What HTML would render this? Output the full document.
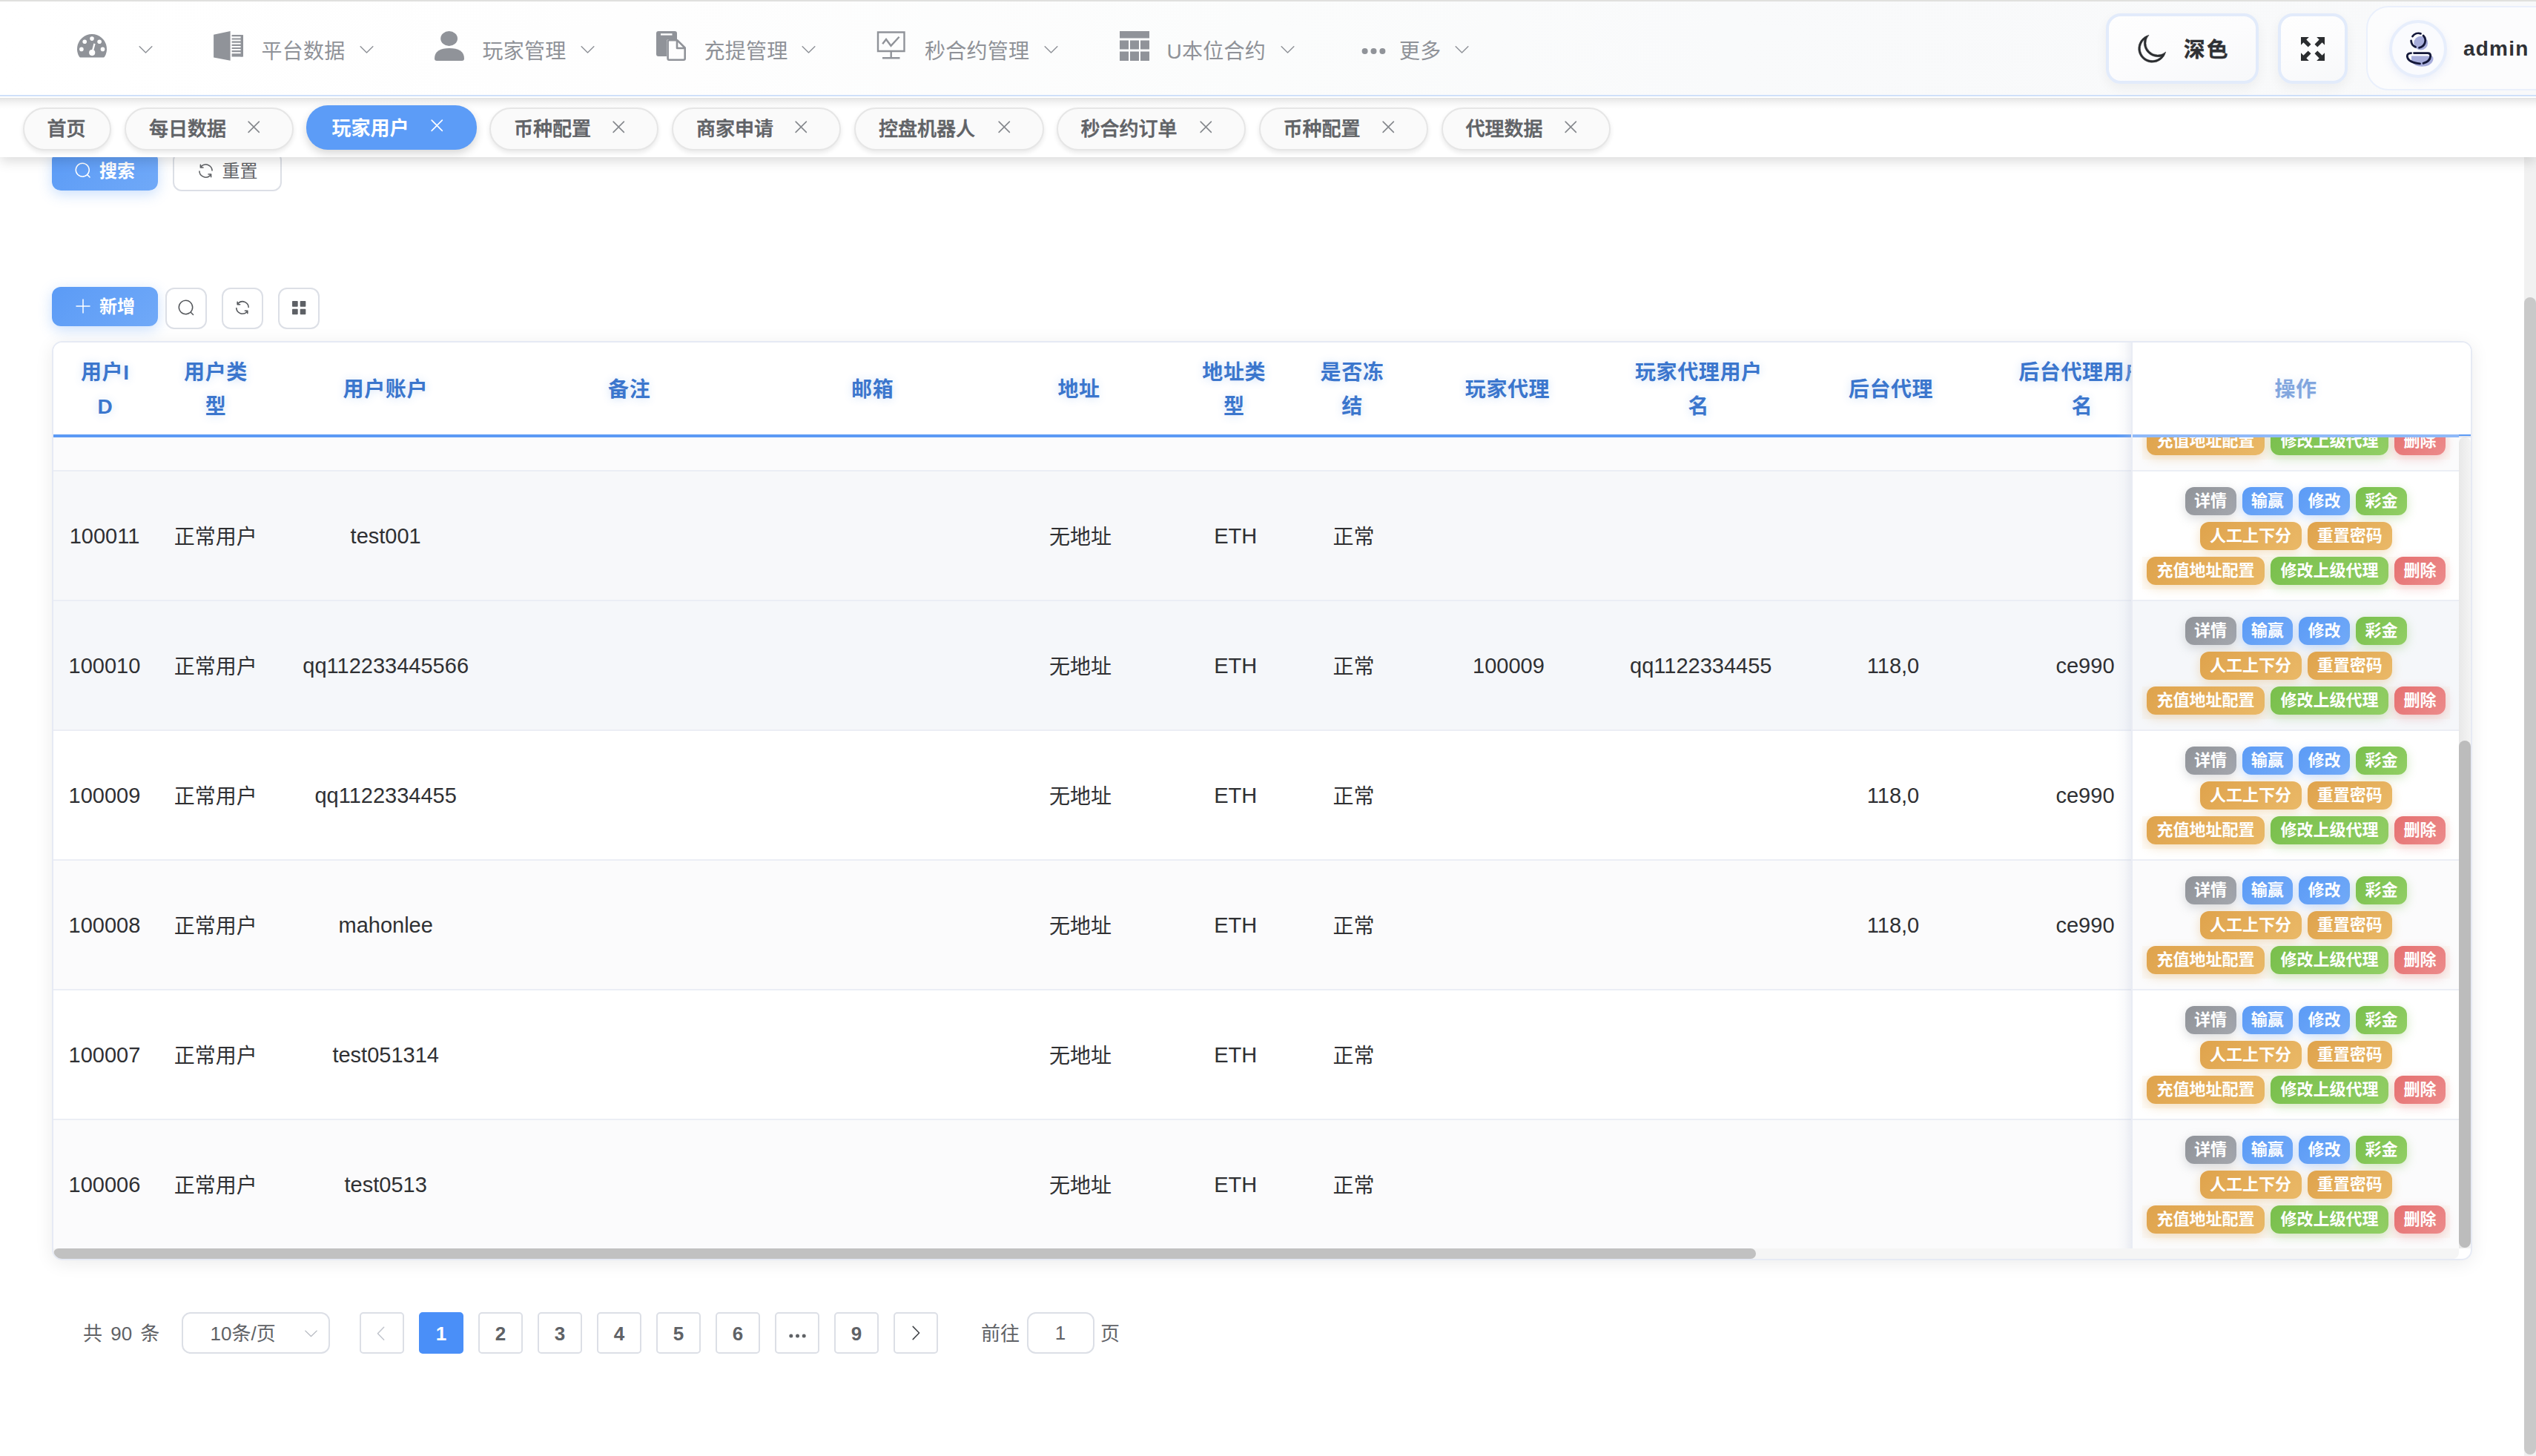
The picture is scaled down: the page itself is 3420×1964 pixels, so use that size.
<!DOCTYPE html>
<html lang="zh-CN"><head><meta charset="utf-8"><title>玩家用户</title><style>
*{box-sizing:border-box;margin:0;padding:0}
html,body{width:3420px;height:1964px;overflow:hidden;background:#fff}
body{position:relative;font-family:"Liberation Sans","Noto Sans CJK SC",sans-serif;color:#303133}
.abs{position:absolute}
svg{position:absolute;overflow:visible}
.t{position:absolute;white-space:nowrap}
#hdr{position:absolute;left:0;top:0;width:3420px;height:130px;z-index:30;background:linear-gradient(90deg,#ffffff 0%,#fefefe 25%,#fbfcfc 50%,#f9fafb 68%,#f8f9fa 100%);border-bottom:2px solid #cfe0f9}
#topline{position:absolute;left:0;top:0;width:3420px;height:2px;background:#e0e0de;z-index:40}
.mt{position:absolute;top:50.3px;height:40px;line-height:40px;font-size:28px;letter-spacing:.25px;color:#8f9298;white-space:nowrap}
.hbtn{position:absolute;border:4px solid #e2ebfb;border-radius:20px;background:linear-gradient(160deg,#fefefe 0%,#fcfcfd 50%,#f7f8fa 100%);box-shadow:0 6px 16px rgba(0,0,0,.05)}
#tabs{position:absolute;left:0;top:130px;width:3420px;height:82px;z-index:20;background:linear-gradient(180deg,#fff 0,#fff 2px,#e4e4e4 2.5px,#ececec 5px,#f5f5f5 9px,#fbfbfb 13px,#fff 17px);box-shadow:0 5px 16px rgba(0,0,0,.15)}
.tab{position:absolute;top:144.5px;height:58px;border:2px solid #e6e6e6;border-radius:29px;background:#fafafa;box-shadow:0 3px 6px rgba(0,0,0,.09);z-index:21}
.tab.on{top:142px;height:60px;border:0;background:#5c9cf7;box-shadow:0 5px 12px rgba(0,0,0,.16)}
.tab span{position:absolute;left:31px;top:0;height:54px;line-height:54px;font-size:26px;font-weight:500;-webkit-text-stroke:.55px #606266;color:#606266;white-space:nowrap}
.tab.on span{left:34.5px;height:62px;line-height:62px;color:#fff;font-weight:700;-webkit-text-stroke:0}
.pbtn{position:absolute;width:143px;height:53px;border-radius:12px;background:linear-gradient(135deg,#5b9bf6 0%,#70a9f8 100%);box-shadow:0 5px 18px rgba(91,155,246,.32)}
.pbtn span{position:absolute;left:64px;top:0;line-height:53px;font-size:24px;font-weight:700;color:#fff;white-space:nowrap}
.ibtn{position:absolute;top:388px;width:56px;height:56px;border:2px solid #dcdfe6;border-radius:12px;background:#fff}
#card{position:absolute;left:70px;top:460px;width:3264px;height:1240px;border:2px solid #e6eaf4;border-radius:14px;overflow:hidden;background:#fff;z-index:2}
#cardsh{position:absolute;left:70px;top:460px;width:3264px;height:1240px;border-radius:14px;box-shadow:0 4px 24px rgba(0,0,0,.08);z-index:1}
.th{position:absolute;text-align:center;font-size:28px;font-weight:700;color:#3b76cd;line-height:46px;letter-spacing:.6px;text-shadow:0 1px 12px rgba(64,128,220,.24);white-space:nowrap;transform:translateX(-50%)}
.row{position:absolute;left:0;width:3260px;height:175px;border-bottom:2px solid #ebeef5}
.c{position:absolute;font-size:28px;line-height:40px;color:#2f3033;white-space:nowrap;transform:translateX(-50%);top:69.1px}
.c.l{font-size:29px;top:66.6px}
.tg{position:absolute;height:38px;line-height:38px;border-radius:12px;font-size:22px;font-weight:700;color:#fff;text-align:center;white-space:nowrap}
.tg.i{background:linear-gradient(135deg,#909399,#a4a7ad);box-shadow:0 4px 14px rgba(144,147,153,.33)}
.tg.p{background:linear-gradient(135deg,#5b9bf6,#72aaf8);box-shadow:0 4px 14px rgba(91,155,246,.33)}
.tg.s{background:linear-gradient(135deg,#79bf4c,#92cf65);box-shadow:0 4px 14px rgba(121,191,76,.33)}
.tg.w{background:linear-gradient(135deg,#dfa34c,#eab968);box-shadow:0 4px 14px rgba(223,163,76,.33)}
.tg.d{background:linear-gradient(135deg,#e57070,#ec8b8b);box-shadow:0 4px 14px rgba(229,112,112,.33)}
.band{position:absolute;left:13px;top:114.6px;width:415px;height:44px;background:rgba(235,170,90,.05)}
.pg{position:absolute;top:1770px;width:60px;height:56px;border:2px solid #dcdfe6;border-radius:5px;background:#fff;text-align:center;font-size:26px;font-weight:700;color:#5f6266;line-height:54px}
.pg.on{background:#4a8ff8;border-color:#4a8ff8;color:#fff}
.pt{position:absolute;font-size:26px;color:#606266;line-height:40px;white-space:nowrap;word-spacing:4px}
</style></head><body>
<div id="topline"></div>
<div id="hdr">
<svg style="left:104px;top:45.8px" width="40" height="32" viewBox="0 0 40 32">
<path d="M3.1 30.8 A20 20 0 1 1 36.9 30.8 Q36.5 31.6 35.6 31.6 L4.4 31.6 Q3.5 31.6 3.1 30.8 Z" fill="#909399"/>
<circle cx="5.9" cy="20.4" r="2.8" fill="#fff"/><circle cx="10.2" cy="10.3" r="2.8" fill="#fff"/><circle cx="20" cy="6.1" r="2.8" fill="#fff"/><circle cx="30.1" cy="10.3" r="2.8" fill="#fff"/><circle cx="34.5" cy="20.4" r="2.8" fill="#fff"/>
<path d="M22.4 12.6 L24.6 13.2 L21.6 24.5 L19.4 23.9 Z" fill="#fff"/><circle cx="20.2" cy="25.1" r="4.1" fill="#fff"/>
</svg>
<svg style="left:183.5px;top:53.62px;" width="25" height="25" viewBox="0 0 1024 1024"><path fill="#909399" d="M831.872 340.864 512 652.672 192.128 340.864a30.592 30.592 0 0 0-42.752 0 29.12 29.12 0 0 0 0 41.6L489.664 714.24a32 32 0 0 0 44.672 0l340.288-331.712a29.12 29.12 0 0 0 0-41.728 30.592 30.592 0 0 0-42.752 0z"/></svg>
<svg style="left:288px;top:42px" width="40" height="40" viewBox="0 0 40 40">
<path d="M0.1 4.8 L22.6 0 L22.6 39.8 L0.1 35.5 Z" fill="#909399"/>
<path d="M24.6 6.2 H38 M24.6 10.5 H38 M24.6 14.6 H38 M24.6 18.9 H38 M24.6 23 H38 M24.6 27.2 H38 M24.6 31.4 H38 M24.6 33.5 H38" fill="none" stroke="#909399" stroke-width="2.2"/>
<path d="M38.3 5.1 V34.6" stroke="#909399" stroke-width="3.4"/>
</svg>
<div class="mt" style="left:352.5px">平台数据</div>
<svg style="left:481.5px;top:53.62px;" width="25" height="25" viewBox="0 0 1024 1024"><path fill="#909399" d="M831.872 340.864 512 652.672 192.128 340.864a30.592 30.592 0 0 0-42.752 0 29.12 29.12 0 0 0 0 41.6L489.664 714.24a32 32 0 0 0 44.672 0l340.288-331.712a29.12 29.12 0 0 0 0-41.728 30.592 30.592 0 0 0-42.752 0z"/></svg>
<svg style="left:586px;top:42px" width="40" height="40" viewBox="0 0 40 40">
<ellipse cx="19.6" cy="10" rx="11.4" ry="10" fill="#909399"/>
<path d="M0 37 C0 27 8 23 20 23 C32 23 40 27 40 37 Q40 40 37 40 L3 40 Q0 40 0 37 Z" fill="#909399"/>
</svg>
<div class="mt" style="left:650.5px">玩家管理</div>
<svg style="left:780px;top:53.62px;" width="25" height="25" viewBox="0 0 1024 1024"><path fill="#909399" d="M831.872 340.864 512 652.672 192.128 340.864a30.592 30.592 0 0 0-42.752 0 29.12 29.12 0 0 0 0 41.6L489.664 714.24a32 32 0 0 0 44.672 0l340.288-331.712a29.12 29.12 0 0 0 0-41.728 30.592 30.592 0 0 0-42.752 0z"/></svg>
<svg style="left:885px;top:42px" width="40" height="40" viewBox="0 0 40 40">
<path d="M3 0 H25 Q28 0 28 3 V11 H17 Q14 11 14 14 V34 H3 Q0 34 0 31 V3 Q0 0 3 0 Z" fill="#909399"/>
<rect x="6" y="3.2" width="15.5" height="2.4" fill="#fff"/>
<path d="M17.3 12.3 H28.5 L38.7 22.5 V37 Q38.7 38.7 37 38.7 H17.3 Q15.6 38.7 15.6 37 V14 Q15.6 12.3 17.3 12.3 Z M28 12.5 V23 H38.5" fill="none" stroke="#909399" stroke-width="2.6" stroke-linejoin="round"/>
</svg>
<div class="mt" style="left:949.5px">充提管理</div>
<svg style="left:1078.3px;top:53.62px;" width="25" height="25" viewBox="0 0 1024 1024"><path fill="#909399" d="M831.872 340.864 512 652.672 192.128 340.864a30.592 30.592 0 0 0-42.752 0 29.12 29.12 0 0 0 0 41.6L489.664 714.24a32 32 0 0 0 44.672 0l340.288-331.712a29.12 29.12 0 0 0 0-41.728 30.592 30.592 0 0 0-42.752 0z"/></svg>
<svg style="left:1182px;top:42px" width="40" height="38" viewBox="0 0 40 38">
<path d="M2 1.5 H37.5 V27 H2 Z" fill="none" stroke="#909399" stroke-width="2.4"/>
<path d="M8.2 17.2 L13 11 L19.5 19.8 L30.6 7.7" fill="none" stroke="#909399" stroke-width="2.4" stroke-linejoin="miter"/>
<path d="M19.7 27 V36 M8 36.3 H31.5" fill="none" stroke="#909399" stroke-width="2.4"/>
</svg>
<div class="mt" style="left:1247px">秒合约管理</div>
<svg style="left:1404.7px;top:53.62px;" width="25" height="25" viewBox="0 0 1024 1024"><path fill="#909399" d="M831.872 340.864 512 652.672 192.128 340.864a30.592 30.592 0 0 0-42.752 0 29.12 29.12 0 0 0 0 41.6L489.664 714.24a32 32 0 0 0 44.672 0l340.288-331.712a29.12 29.12 0 0 0 0-41.728 30.592 30.592 0 0 0-42.752 0z"/></svg>
<svg style="left:1510px;top:42px" width="40" height="40" viewBox="0 0 40 40">
<rect x="0" y="0" width="40" height="9.5" fill="#909399"/>
<rect x="0" y="12.5" width="12" height="12" fill="#909399"/><rect x="14" y="12.5" width="12" height="12" fill="#909399"/><rect x="28" y="12.5" width="12" height="12" fill="#909399"/>
<rect x="0" y="27.5" width="12" height="12.5" fill="#909399"/><rect x="14" y="27.5" width="12" height="12.5" fill="#909399"/><rect x="28" y="27.5" width="12" height="12.5" fill="#909399"/>
</svg>
<div class="mt" style="left:1573.5px">U本位合约</div>
<svg style="left:1723.9px;top:53.62px;" width="25" height="25" viewBox="0 0 1024 1024"><path fill="#909399" d="M831.872 340.864 512 652.672 192.128 340.864a30.592 30.592 0 0 0-42.752 0 29.12 29.12 0 0 0 0 41.6L489.664 714.24a32 32 0 0 0 44.672 0l340.288-331.712a29.12 29.12 0 0 0 0-41.728 30.592 30.592 0 0 0-42.752 0z"/></svg>
<svg style="left:1836px;top:64px" width="33" height="10" viewBox="0 0 33 10"><circle cx="4.6" cy="5" r="4" fill="#909399"/><circle cx="16.5" cy="5" r="4" fill="#909399"/><circle cx="28.4" cy="5" r="4" fill="#909399"/></svg>
<div class="mt" style="left:1887px">更多</div>
<svg style="left:1958.8px;top:53.62px;" width="25" height="25" viewBox="0 0 1024 1024"><path fill="#909399" d="M831.872 340.864 512 652.672 192.128 340.864a30.592 30.592 0 0 0-42.752 0 29.12 29.12 0 0 0 0 41.6L489.664 714.24a32 32 0 0 0 44.672 0l340.288-331.712a29.12 29.12 0 0 0 0-41.728 30.592 30.592 0 0 0-42.752 0z"/></svg>
<div class="hbtn" style="left:2840px;top:18px;width:206px;height:95px"></div>
<svg style="left:2880.62px;top:43.98px;" width="43" height="43" viewBox="0 0 1024 1024"><path fill="#2b2d30" stroke="#2b2d30" stroke-width="12" d="M240.448 240.448a384 384 0 1 0 559.424 525.696 448 448 0 0 1-542.016-542.08 390.592 390.592 0 0 0-17.408 16.384zm181.056 362.048a384 384 0 0 0 525.632 16.384A448 448 0 1 1 405.056 76.8a384 384 0 0 0 16.448 525.696z"/></svg>
<div class="t" style="left:2945px;top:47.2px;font-size:28.5px;font-weight:700;-webkit-text-stroke:.35px #2f3135;letter-spacing:2.6px;line-height:40px;color:#2f3135">深色</div>
<div class="hbtn" style="left:3072px;top:18px;width:94px;height:95px"></div>
<svg style="left:3103px;top:50px" width="32" height="32" viewBox="0 0 32 32"><path d="M0 0 L10.8 0 L0 10.8 Z" fill="#2b2d30"/><path d="M3.5 3.5 L11.6 11.6" stroke="#2b2d30" stroke-width="5.4"/><path d="M32 0 L21.2 0 L32 10.8 Z" fill="#2b2d30"/><path d="M28.5 3.5 L20.4 11.6" stroke="#2b2d30" stroke-width="5.4"/><path d="M0 32 L10.8 32 L0 21.2 Z" fill="#2b2d30"/><path d="M3.5 28.5 L11.6 20.4" stroke="#2b2d30" stroke-width="5.4"/><path d="M32 32 L21.2 32 L32 21.2 Z" fill="#2b2d30"/><path d="M28.5 28.5 L20.4 20.4" stroke="#2b2d30" stroke-width="5.4"/></svg>
<div class="abs" style="left:3191px;top:8px;width:300px;height:114px;border:2px solid #eaf0fc;border-radius:30px;background:rgba(255,255,255,.55)"></div>
<div class="abs" style="left:3222px;top:26.5px;width:78px;height:78px;border-radius:50%;border:4px solid #e7eefc;background:#fafbfe;box-shadow:0 4px 12px rgba(120,150,220,.12)"></div>
<svg style="left:3241.5px;top:43px" width="40" height="48" viewBox="0 0 40 48">
<circle cx="22.7" cy="15.2" r="9.4" fill="#a7addb"/>
<path d="M10 32.6 H37.5 Q40.5 34 39 39 Q36 46.7 24 46.7 Q14 46.5 10 40 Z" fill="#a7addb"/>
<path d="M9.6 12 A9.7 9.7 0 0 0 15.5 20.4" fill="none" stroke="#14183a" stroke-width="2.8" stroke-linecap="round"/>
<path d="M11.5 6 A9.7 9.7 0 0 1 22.5 2.3" fill="none" stroke="#14183a" stroke-width="2.8" stroke-linecap="round"/>
<path d="M26 5 A9.7 9.7 0 0 1 20.5 21.3" fill="none" stroke="#14183a" stroke-width="2.8" stroke-linecap="round"/>
<path d="M13.5 28.6 H32 Q35.8 28.6 35.8 32.5 Q35 40 26 42.3" fill="none" stroke="#14183a" stroke-width="2.8" stroke-linecap="round"/>
<path d="M9.5 28.7 Q4.2 28.8 4.3 33 Q5.5 41.5 21.5 42.8" fill="none" stroke="#14183a" stroke-width="2.8" stroke-linecap="round"/>
</svg>
<div class="t" style="left:3322px;top:46.3px;font-size:28px;font-weight:700;letter-spacing:1.2px;line-height:40px;color:#2f3135">admin</div>
</div>
<div id="tabs"></div>
<div class="tab" style="left:30.5px;width:119.5px"><span>首页</span></div>
<div class="tab" style="left:168px;width:228px"><span>每日数据</span></div>
<svg style="left:329.25px;top:158.25px;z-index:22" width="26.5" height="26.5" viewBox="0 0 1024 1024"><path fill="#85888d" d="M764.288 214.592 512 466.88 259.712 214.592a31.936 31.936 0 0 0-45.12 45.12L466.752 512 214.528 764.224a31.936 31.936 0 1 0 45.12 45.184L512 557.184l252.288 252.288a31.936 31.936 0 0 0 45.12-45.12L557.12 512.064l252.288-252.352a31.936 31.936 0 1 0-45.12-45.184z"/></svg>
<div class="tab on" style="left:413px;width:230px"><span>玩家用户</span></div>
<svg style="left:575.55px;top:156.25px;z-index:22" width="26.5" height="26.5" viewBox="0 0 1024 1024"><path fill="#fff" d="M764.288 214.592 512 466.88 259.712 214.592a31.936 31.936 0 0 0-45.12 45.12L466.752 512 214.528 764.224a31.936 31.936 0 1 0 45.12 45.184L512 557.184l252.288 252.288a31.936 31.936 0 0 0 45.12-45.12L557.12 512.064l252.288-252.352a31.936 31.936 0 1 0-45.12-45.184z"/></svg>
<div class="tab" style="left:660px;width:228px"><span>币种配置</span></div>
<svg style="left:821.25px;top:158.25px;z-index:22" width="26.5" height="26.5" viewBox="0 0 1024 1024"><path fill="#85888d" d="M764.288 214.592 512 466.88 259.712 214.592a31.936 31.936 0 0 0-45.12 45.12L466.752 512 214.528 764.224a31.936 31.936 0 1 0 45.12 45.184L512 557.184l252.288 252.288a31.936 31.936 0 0 0 45.12-45.12L557.12 512.064l252.288-252.352a31.936 31.936 0 1 0-45.12-45.184z"/></svg>
<div class="tab" style="left:906px;width:228px"><span>商家申请</span></div>
<svg style="left:1067.25px;top:158.25px;z-index:22" width="26.5" height="26.5" viewBox="0 0 1024 1024"><path fill="#85888d" d="M764.288 214.592 512 466.88 259.712 214.592a31.936 31.936 0 0 0-45.12 45.12L466.752 512 214.528 764.224a31.936 31.936 0 1 0 45.12 45.184L512 557.184l252.288 252.288a31.936 31.936 0 0 0 45.12-45.12L557.12 512.064l252.288-252.352a31.936 31.936 0 1 0-45.12-45.184z"/></svg>
<div class="tab" style="left:1152px;width:255.5px"><span>控盘机器人</span></div>
<svg style="left:1340.75px;top:158.25px;z-index:22" width="26.5" height="26.5" viewBox="0 0 1024 1024"><path fill="#85888d" d="M764.288 214.592 512 466.88 259.712 214.592a31.936 31.936 0 0 0-45.12 45.12L466.752 512 214.528 764.224a31.936 31.936 0 1 0 45.12 45.184L512 557.184l252.288 252.288a31.936 31.936 0 0 0 45.12-45.12L557.12 512.064l252.288-252.352a31.936 31.936 0 1 0-45.12-45.184z"/></svg>
<div class="tab" style="left:1424.5px;width:255px"><span>秒合约订单</span></div>
<svg style="left:1612.75px;top:158.25px;z-index:22" width="26.5" height="26.5" viewBox="0 0 1024 1024"><path fill="#85888d" d="M764.288 214.592 512 466.88 259.712 214.592a31.936 31.936 0 0 0-45.12 45.12L466.752 512 214.528 764.224a31.936 31.936 0 1 0 45.12 45.184L512 557.184l252.288 252.288a31.936 31.936 0 0 0 45.12-45.12L557.12 512.064l252.288-252.352a31.936 31.936 0 1 0-45.12-45.184z"/></svg>
<div class="tab" style="left:1697.5px;width:228px"><span>币种配置</span></div>
<svg style="left:1858.75px;top:158.25px;z-index:22" width="26.5" height="26.5" viewBox="0 0 1024 1024"><path fill="#85888d" d="M764.288 214.592 512 466.88 259.712 214.592a31.936 31.936 0 0 0-45.12 45.12L466.752 512 214.528 764.224a31.936 31.936 0 1 0 45.12 45.184L512 557.184l252.288 252.288a31.936 31.936 0 0 0 45.12-45.12L557.12 512.064l252.288-252.352a31.936 31.936 0 1 0-45.12-45.184z"/></svg>
<div class="tab" style="left:1943.5px;width:228px"><span>代理数据</span></div>
<svg style="left:2104.75px;top:158.25px;z-index:22" width="26.5" height="26.5" viewBox="0 0 1024 1024"><path fill="#85888d" d="M764.288 214.592 512 466.88 259.712 214.592a31.936 31.936 0 0 0-45.12 45.12L466.752 512 214.528 764.224a31.936 31.936 0 1 0 45.12 45.184L512 557.184l252.288 252.288a31.936 31.936 0 0 0 45.12-45.12L557.12 512.064l252.288-252.352a31.936 31.936 0 1 0-45.12-45.184z"/></svg>
<div class="pbtn" style="left:70px;top:204px"><span>搜索</span></div>
<svg style="left:100.26px;top:218.16px;" width="24" height="24" viewBox="0 0 1024 1024"><path fill="#fff" d="M795.904 750.72l124.992 124.928a32 32 0 0 1-45.248 45.248L750.656 795.904a416 416 0 1 1 45.248-45.248zM480 832a352 352 0 1 0 0-704 352 352 0 0 0 0 704z"/></svg>
<div class="abs" style="left:233px;top:204px;width:147px;height:54px;border:2px solid #dcdfe6;border-radius:12px;background:#fff"></div>
<svg style="left:264.5px;top:217.6px;" width="25" height="25" viewBox="0 0 1024 1024"><path fill="#606266" d="M771.776 794.88A384 384 0 0 1 128 512h64a320 320 0 0 0 555.712 216.448H654.72a32 32 0 1 1 0-64h149.056a32 32 0 0 1 32 32v148.928a32 32 0 1 1-64 0v-50.56zM276.288 295.616h92.992a32 32 0 0 1 0 64H220.16a32 32 0 0 1-32-32V178.56a32 32 0 0 1 64 0v50.56A384 384 0 0 1 896.128 512h-64a320 320 0 0 0-555.776-216.384z"/></svg>
<div class="t" style="left:299.5px;top:211px;font-size:24px;line-height:40px;color:#606266">重置</div>
<div class="pbtn" style="left:70px;top:387px"><span>新增</span></div>
<svg style="left:99.65px;top:401.2px;" width="24" height="24" viewBox="0 0 1024 1024"><path fill="#fff" d="M480 480V128a32 32 0 0 1 64 0v352h352a32 32 0 1 1 0 64H544v352a32 32 0 1 1-64 0V544H128a32 32 0 0 1 0-64h352z"/></svg>
<div class="ibtn" style="left:223px"></div>
<div class="ibtn" style="left:299px"></div>
<div class="ibtn" style="left:375px"></div>
<svg style="left:238.52px;top:402.62px;" width="24.5" height="24.5" viewBox="0 0 1024 1024"><path fill="#55585c" d="M795.904 750.72l124.992 124.928a32 32 0 0 1-45.248 45.248L750.656 795.904a416 416 0 1 1 45.248-45.248zM480 832a352 352 0 1 0 0-704 352 352 0 0 0 0 704z"/></svg>
<svg style="left:315px;top:402.9px;" width="24" height="24" viewBox="0 0 1024 1024"><path fill="#55585c" d="M771.776 794.88A384 384 0 0 1 128 512h64a320 320 0 0 0 555.712 216.448H654.72a32 32 0 1 1 0-64h149.056a32 32 0 0 1 32 32v148.928a32 32 0 1 1-64 0v-50.56zM276.288 295.616h92.992a32 32 0 0 1 0 64H220.16a32 32 0 0 1-32-32V178.56a32 32 0 0 1 64 0v50.56A384 384 0 0 1 896.128 512h-64a320 320 0 0 0-555.776-216.384z"/></svg>
<svg style="left:390.8px;top:402.7px;" width="24.4" height="24.4" viewBox="0 0 1024 1024"><path fill="#5d6065" d="M160 448a32 32 0 0 1-32-32V160.064a32 32 0 0 1 32-32h256a32 32 0 0 1 32 32V416a32 32 0 0 1-32 32H160zm448 0a32 32 0 0 1-32-32V160.064a32 32 0 0 1 32-32h255.936a32 32 0 0 1 32 32V416a32 32 0 0 1-32 32H608zM160 896a32 32 0 0 1-32-32V608a32 32 0 0 1 32-32h256a32 32 0 0 1 32 32v256a32 32 0 0 1-32 32H160zm448 0a32 32 0 0 1-32-32V608a32 32 0 0 1 32-32h255.936a32 32 0 0 1 32 32v256a32 32 0 0 1-32 32H608z"/></svg>
<div id="cardsh"></div>
<div id="card">
<div class="abs" style="left:0;top:128px;width:3260px;height:1094px;overflow:hidden">
<div class="row" style="top:-129px;background:#fbfbfc">
</div>
<div class="row" style="top:46px;background:#f7f8fa">
<div class="c l" style="left:69px">100011</div>
<div class="c" style="left:218.7px">正常用户</div>
<div class="c l" style="left:448.20000000000005px">test001</div>
<div class="c" style="left:1385px">无地址</div>
<div class="c l" style="left:1594.2px">ETH</div>
<div class="c" style="left:1753.5px">正常</div>
</div>
<div class="row" style="top:221px;background:#f5f7fa">
<div class="c l" style="left:69px">100010</div>
<div class="c" style="left:218.7px">正常用户</div>
<div class="c l" style="left:448.20000000000005px">qq112233445566</div>
<div class="c" style="left:1385px">无地址</div>
<div class="c l" style="left:1594.2px">ETH</div>
<div class="c" style="left:1753.5px">正常</div>
<div class="c l" style="left:1962.5px">100009</div>
<div class="c l" style="left:2221.8px">qq1122334455</div>
<div class="c l" style="left:2481px">118,0</div>
<div class="c l" style="left:2740px">ce990</div>
</div>
<div class="row" style="top:396px;background:#ffffff">
<div class="c l" style="left:69px">100009</div>
<div class="c" style="left:218.7px">正常用户</div>
<div class="c l" style="left:448.20000000000005px">qq1122334455</div>
<div class="c" style="left:1385px">无地址</div>
<div class="c l" style="left:1594.2px">ETH</div>
<div class="c" style="left:1753.5px">正常</div>
<div class="c l" style="left:2481px">118,0</div>
<div class="c l" style="left:2740px">ce990</div>
</div>
<div class="row" style="top:571px;background:#fbfbfc">
<div class="c l" style="left:69px">100008</div>
<div class="c" style="left:218.7px">正常用户</div>
<div class="c l" style="left:448.20000000000005px">mahonlee</div>
<div class="c" style="left:1385px">无地址</div>
<div class="c l" style="left:1594.2px">ETH</div>
<div class="c" style="left:1753.5px">正常</div>
<div class="c l" style="left:2481px">118,0</div>
<div class="c l" style="left:2740px">ce990</div>
</div>
<div class="row" style="top:746px;background:#ffffff">
<div class="c l" style="left:69px">100007</div>
<div class="c" style="left:218.7px">正常用户</div>
<div class="c l" style="left:448.20000000000005px">test051314</div>
<div class="c" style="left:1385px">无地址</div>
<div class="c l" style="left:1594.2px">ETH</div>
<div class="c" style="left:1753.5px">正常</div>
</div>
<div class="row" style="top:921px;background:#fbfbfc">
<div class="c l" style="left:69px">100006</div>
<div class="c" style="left:218.7px">正常用户</div>
<div class="c l" style="left:448.20000000000005px">test0513</div>
<div class="c" style="left:1385px">无地址</div>
<div class="c l" style="left:1594.2px">ETH</div>
<div class="c" style="left:1753.5px">正常</div>
</div>
</div>
<div class="abs" style="left:0;top:0;width:3260px;height:124px;background:#fff"></div>
<div class="abs" style="left:0;top:124px;width:3260px;height:4px;background:#5b9af5"></div>
<div class="th" style="left:69.80000000000001px;top:18.2px">用户I<br>D</div>
<div class="th" style="left:219px;top:18.2px">用户类<br>型</div>
<div class="th" style="left:447.79999999999995px;top:40.5px">用户账户</div>
<div class="th" style="left:776.7px;top:40.5px">备注</div>
<div class="th" style="left:1104.7px;top:40.5px">邮箱</div>
<div class="th" style="left:1383px;top:40.5px">地址</div>
<div class="th" style="left:1592.2px;top:18.2px">地址类<br>型</div>
<div class="th" style="left:1751.5px;top:18.2px">是否冻<br>结</div>
<div class="th" style="left:1961px;top:40.5px">玩家代理</div>
<div class="th" style="left:2218.8px;top:18.2px">玩家代理用户<br>名</div>
<div class="th" style="left:2478px;top:40.5px">后台代理</div>
<div class="th" style="left:2736px;top:18.2px">后台代理用户<br>名</div>
<div class="abs" style="left:2782px;top:0;width:22px;height:1236px;background:linear-gradient(90deg,rgba(200,208,225,0) 0%,rgba(200,208,225,.10) 50%,rgba(190,198,218,.30) 100%)"></div>
<div class="abs" style="left:2802px;top:0;width:2px;height:1236px;background:#e9ecf4"></div>
<div class="abs" style="left:2804px;top:128px;width:440px;height:1094px;overflow:hidden;background:#fff">
<div class="row" style="top:-129px;width:440px;background:#fbfbfc">
<div class="band"></div>
<div class="tg i" style="left:70.6px;top:20.9px;width:69px">详情</div><div class="tg p" style="left:147.6px;top:20.9px;width:68.5px">输赢</div><div class="tg p" style="left:224.1px;top:20.9px;width:69px">修改</div><div class="tg s" style="left:301.1px;top:20.9px;width:69px">彩金</div>
<div class="tg w" style="left:90.6px;top:67.8px;width:137px">人工上下分</div><div class="tg w" style="left:235.6px;top:67.8px;width:114.5px">重置密码</div>
<div class="tg w" style="left:19px;top:115px;width:159px">充值地址配置</div><div class="tg s" style="left:186px;top:115px;width:159px">修改上级代理</div><div class="tg d" style="left:353px;top:115px;width:69px">删除</div>
</div>
<div class="row" style="top:46px;width:440px;background:#ffffff">
<div class="band"></div>
<div class="tg i" style="left:70.6px;top:20.9px;width:69px">详情</div><div class="tg p" style="left:147.6px;top:20.9px;width:68.5px">输赢</div><div class="tg p" style="left:224.1px;top:20.9px;width:69px">修改</div><div class="tg s" style="left:301.1px;top:20.9px;width:69px">彩金</div>
<div class="tg w" style="left:90.6px;top:67.8px;width:137px">人工上下分</div><div class="tg w" style="left:235.6px;top:67.8px;width:114.5px">重置密码</div>
<div class="tg w" style="left:19px;top:115px;width:159px">充值地址配置</div><div class="tg s" style="left:186px;top:115px;width:159px">修改上级代理</div><div class="tg d" style="left:353px;top:115px;width:69px">删除</div>
</div>
<div class="row" style="top:221px;width:440px;background:#f5f7fa">
<div class="band"></div>
<div class="tg i" style="left:70.6px;top:20.9px;width:69px">详情</div><div class="tg p" style="left:147.6px;top:20.9px;width:68.5px">输赢</div><div class="tg p" style="left:224.1px;top:20.9px;width:69px">修改</div><div class="tg s" style="left:301.1px;top:20.9px;width:69px">彩金</div>
<div class="tg w" style="left:90.6px;top:67.8px;width:137px">人工上下分</div><div class="tg w" style="left:235.6px;top:67.8px;width:114.5px">重置密码</div>
<div class="tg w" style="left:19px;top:115px;width:159px">充值地址配置</div><div class="tg s" style="left:186px;top:115px;width:159px">修改上级代理</div><div class="tg d" style="left:353px;top:115px;width:69px">删除</div>
</div>
<div class="row" style="top:396px;width:440px;background:#ffffff">
<div class="band"></div>
<div class="tg i" style="left:70.6px;top:20.9px;width:69px">详情</div><div class="tg p" style="left:147.6px;top:20.9px;width:68.5px">输赢</div><div class="tg p" style="left:224.1px;top:20.9px;width:69px">修改</div><div class="tg s" style="left:301.1px;top:20.9px;width:69px">彩金</div>
<div class="tg w" style="left:90.6px;top:67.8px;width:137px">人工上下分</div><div class="tg w" style="left:235.6px;top:67.8px;width:114.5px">重置密码</div>
<div class="tg w" style="left:19px;top:115px;width:159px">充值地址配置</div><div class="tg s" style="left:186px;top:115px;width:159px">修改上级代理</div><div class="tg d" style="left:353px;top:115px;width:69px">删除</div>
</div>
<div class="row" style="top:571px;width:440px;background:#fbfbfc">
<div class="band"></div>
<div class="tg i" style="left:70.6px;top:20.9px;width:69px">详情</div><div class="tg p" style="left:147.6px;top:20.9px;width:68.5px">输赢</div><div class="tg p" style="left:224.1px;top:20.9px;width:69px">修改</div><div class="tg s" style="left:301.1px;top:20.9px;width:69px">彩金</div>
<div class="tg w" style="left:90.6px;top:67.8px;width:137px">人工上下分</div><div class="tg w" style="left:235.6px;top:67.8px;width:114.5px">重置密码</div>
<div class="tg w" style="left:19px;top:115px;width:159px">充值地址配置</div><div class="tg s" style="left:186px;top:115px;width:159px">修改上级代理</div><div class="tg d" style="left:353px;top:115px;width:69px">删除</div>
</div>
<div class="row" style="top:746px;width:440px;background:#ffffff">
<div class="band"></div>
<div class="tg i" style="left:70.6px;top:20.9px;width:69px">详情</div><div class="tg p" style="left:147.6px;top:20.9px;width:68.5px">输赢</div><div class="tg p" style="left:224.1px;top:20.9px;width:69px">修改</div><div class="tg s" style="left:301.1px;top:20.9px;width:69px">彩金</div>
<div class="tg w" style="left:90.6px;top:67.8px;width:137px">人工上下分</div><div class="tg w" style="left:235.6px;top:67.8px;width:114.5px">重置密码</div>
<div class="tg w" style="left:19px;top:115px;width:159px">充值地址配置</div><div class="tg s" style="left:186px;top:115px;width:159px">修改上级代理</div><div class="tg d" style="left:353px;top:115px;width:69px">删除</div>
</div>
<div class="row" style="top:921px;width:440px;background:#fbfbfc">
<div class="band"></div>
<div class="tg i" style="left:70.6px;top:20.9px;width:69px">详情</div><div class="tg p" style="left:147.6px;top:20.9px;width:68.5px">输赢</div><div class="tg p" style="left:224.1px;top:20.9px;width:69px">修改</div><div class="tg s" style="left:301.1px;top:20.9px;width:69px">彩金</div>
<div class="tg w" style="left:90.6px;top:67.8px;width:137px">人工上下分</div><div class="tg w" style="left:235.6px;top:67.8px;width:114.5px">重置密码</div>
<div class="tg w" style="left:19px;top:115px;width:159px">充值地址配置</div><div class="tg s" style="left:186px;top:115px;width:159px">修改上级代理</div><div class="tg d" style="left:353px;top:115px;width:69px">删除</div>
</div>
</div>
<div class="abs" style="left:2804px;top:0;width:456px;height:124px;background:#fff"></div>
<div class="abs" style="left:2804px;top:124px;width:440px;height:4px;background:#8fb9f8"></div>
<div class="abs" style="left:3244px;top:124px;width:16px;height:2px;margin-top:1.5px;background:#dfe4ee"></div>
<div class="th" style="left:3024px;top:40.5px;color:#82a6de;text-shadow:0 1px 12px rgba(64,128,220,.14)">操作</div>
<div class="abs" style="left:3244px;top:128px;width:16px;height:1094px;background:linear-gradient(90deg,#e8e8e8,#f4f4f4);border-radius:7px 7px 0 0"></div>
<div class="abs" style="left:3244px;top:536.6px;width:16px;height:684.9px;background:#bcbcbc;border-radius:8px"></div>
<div class="abs" style="left:0;top:1222px;width:3244px;height:14px;background:#f5f5f5;border-radius:0 0 8px 0"></div>
<div class="abs" style="left:0;top:1222px;width:2296px;height:14px;background:#c1c1c1;border-radius:7px"></div>
</div>
<div class="pt" style="left:112px;top:1779px">共 90 条</div>
<div class="abs" style="left:245px;top:1770px;width:200px;height:56px;border:2px solid #dcdfe6;border-radius:12px;background:#fff"></div>
<div class="pt" style="left:283.5px;top:1779px">10条/页</div>
<svg style="left:408.3px;top:1787.06px;" width="23" height="23" viewBox="0 0 1024 1024"><path fill="#b4b8bf" d="M831.872 340.864 512 652.672 192.128 340.864a30.592 30.592 0 0 0-42.752 0 29.12 29.12 0 0 0 0 41.6L489.664 714.24a32 32 0 0 0 44.672 0l340.288-331.712a29.12 29.12 0 0 0 0-41.728 30.592 30.592 0 0 0-42.752 0z"/></svg>
<div class="pg" style="left:485px"></div><svg style="left:502.25px;top:1785.55px;" width="25.5" height="25.5" viewBox="0 0 1024 1024"><path fill="#c0c4cc" d="M609.408 149.376 277.76 489.6a32 32 0 0 0 0 44.672l331.648 340.352a29.12 29.12 0 0 0 41.728 0 30.592 30.592 0 0 0 0-42.752L339.264 511.936l311.872-319.872a30.592 30.592 0 0 0 0-42.688 29.12 29.12 0 0 0-41.728 0z"/></svg>
<div class="pg on" style="left:565px">1</div>
<div class="pg" style="left:645px">2</div>
<div class="pg" style="left:725px">3</div>
<div class="pg" style="left:805px">4</div>
<div class="pg" style="left:885px">5</div>
<div class="pg" style="left:965px">6</div>
<div class="pg" style="left:1045px"></div><svg style="left:1064px;top:1799px" width="23" height="6" viewBox="0 0 23 6"><circle cx="2.8" cy="3" r="2.5" fill="#5f6266"/><circle cx="11.5" cy="3" r="2.5" fill="#5f6266"/><circle cx="20.2" cy="3" r="2.5" fill="#5f6266"/></svg>
<div class="pg" style="left:1125px">9</div>
<div class="pg" style="left:1205px"></div><svg style="left:1221.99px;top:1785.3px;" width="26" height="26" viewBox="0 0 1024 1024"><path fill="#3f4246" d="M340.864 149.312a30.592 30.592 0 0 0 0 42.752L652.736 512 340.864 831.872a30.592 30.592 0 0 0 0 42.752 29.12 29.12 0 0 0 41.728 0L714.24 534.336a32 32 0 0 0 0-44.672L382.592 149.376a29.12 29.12 0 0 0-41.728 0z"/></svg>
<div class="pt" style="left:1323px;top:1779px">前往</div>
<div class="abs" style="left:1384.5px;top:1770px;width:91px;height:56px;border:2px solid #dcdfe6;border-radius:12px;background:#fff;text-align:center;font-size:26px;line-height:52px;color:#606266">1</div>
<div class="pt" style="left:1484px;top:1779px">页</div>
<div class="abs" style="left:3404px;top:212px;width:16px;height:1752px;background:#f1f1f1;z-index:5"></div>
<div class="abs" style="left:3404px;top:400.7px;width:16px;height:1561.3px;background:#c9c9c9;border-radius:8px;z-index:6"></div>
</body></html>
